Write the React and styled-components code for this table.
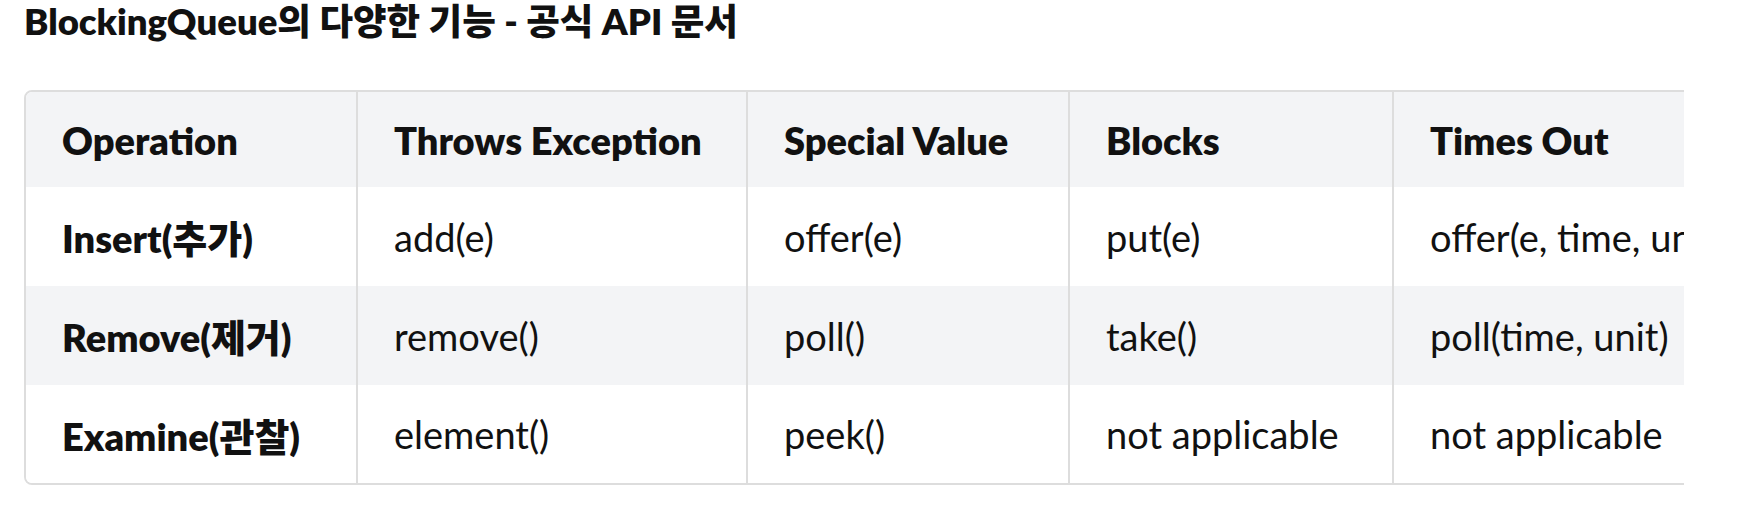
import styled, { createGlobalStyle } from "styled-components";

const GlobalStyle = createGlobalStyle`
  body {
    margin: 0;
    background: #fff;
    color: #111;
    font-family: Lato, "Noto Sans CJK KR", sans-serif;
  }
`;

const rows = [
  { op: "Insert(추가)", cells: ["add(e)", "offer(e)", "put(e)", "offer(e, time, unit)"] },
  { op: "Remove(제거)", cells: ["remove()", "poll()", "take()", "poll(time, unit)"] },
  { op: "Examine(관찰)", cells: ["element()", "peek()", "not applicable", "not applicable"] },
];

const headers = ["Operation", "Throws Exception", "Special Value", "Blocks", "Times Out"];
const widths = [331, 390, 322, 324, 380];

const Page = styled.div`
  padding: 0 24px;
`;

const Title = styled.h3`
  margin: 0;
  font-size: 36.5px;
  line-height: 42px;
  font-weight: 800;
`;

const Scroll = styled.div`
  margin-top: 48px;
  width: 1660px;
  overflow: hidden;
`;

const Frame = styled.div`
  width: ${(p) => p.$width}px;
  border: 2px solid #dddddd;
  border-radius: 8px;
  overflow: hidden;
`;

const Table = styled.table`
  width: 100%;
  table-layout: fixed;
  border-collapse: collapse;
  font-size: 38px;
`;

const Row = styled.tr`
  background: ${(p) => (p.$shaded ? "#f3f4f6" : "#ffffff")};
  height: ${(p) => p.$height}px;
`;

const Cell = styled.td`
  padding: 0 0 0 36px;
  white-space: nowrap;
  overflow: hidden;
  font-weight: ${(p) => (p.$bold ? 800 : 400)};
  text-align: left;
  vertical-align: middle;
  & + & {
    border-left: 2px solid #dddddd;
  }
`;

export default function App() {
  const total = widths.reduce((a, b) => a + b, 0);
  return (
    <Page>
      <GlobalStyle />
      <Title>BlockingQueue의 다양한 기능 - 공식 API 문서</Title>
      <Scroll>
        <Frame $width={total}>
          <Table>
            <colgroup>
              {widths.map((w, i) => (
                <col key={i} style={{ width: w }} />
              ))}
            </colgroup>
            <thead>
              <Row $shaded $height={95}>
                {headers.map((h) => (
                  <Cell as="th" key={h} $bold>
                    {h}
                  </Cell>
                ))}
              </Row>
            </thead>
            <tbody>
              {rows.map((r, i) => (
                <Row key={r.op} $shaded={i === 1} $height={i === 2 ? 98 : 99}>
                  <Cell $bold>{r.op}</Cell>
                  {r.cells.map((c, j) => (
                    <Cell key={j}>{c}</Cell>
                  ))}
                </Row>
              ))}
            </tbody>
          </Table>
        </Frame>
      </Scroll>
    </Page>
  );
}
